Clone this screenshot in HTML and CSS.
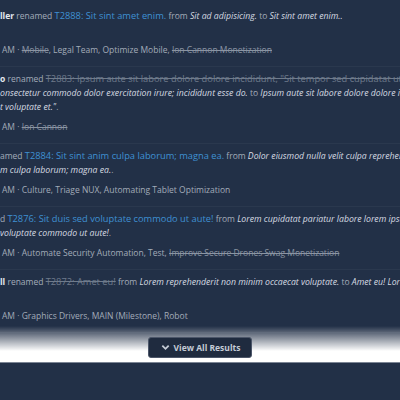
FILE: index.html
```html
<!DOCTYPE html>
<html lang="en">
<head>
  <meta charset="UTF-8">
  <title>Feed</title>
  <link rel="stylesheet" href="styles.css">
</head>
<body>
  <div class="feed">
    <div class="story">
      <div class="story-head">
        <div class="line"><b class="actor">ller</b> renamed <a class="task">T2888: Sit sint amet enim.</a> from <em>Sit ad adipisicing.</em> to <em>Sit sint amet enim..</em></div>
        <div class="line"></div>
      </div>
      <div class="story-foot">AM · <s>Mobile</s>, Legal Team, Optimize Mobile, <s>Ion Cannon Monetization</s></div>
    </div>

    <div class="story">
      <div class="story-head">
        <div class="line"><b class="actor">o</b> renamed <a class="task closed">T2883: Ipsum aute sit labore dolore dolore incididunt, "Sit tempor sed cupidatat ut labore</a></div>
        <div class="line"><em>onsectetur commodo dolor exercitation irure; incididunt esse do.</em> to <em>Ipsum aute sit labore dolore dolore incididunt</em></div>
        <div class="line"><em>t voluptate et."</em>.</div>
      </div>
      <div class="story-foot">AM · <s>Ion Cannon</s></div>
    </div>

    <div class="story">
      <div class="story-head">
        <div class="line">amed <a class="task">T2884: Sit sint anim culpa laborum; magna ea.</a> from <em>Dolor eiusmod nulla velit culpa reprehenderit</em></div>
        <div class="line"><em>m culpa laborum; magna ea.</em>.</div>
      </div>
      <div class="story-foot">AM · Culture, Triage NUX, Automating Tablet Optimization</div>
    </div>

    <div class="story">
      <div class="story-head">
        <div class="line">d <a class="task">T2876: Sit duis sed voluptate commodo ut aute!</a> from <em>Lorem cupidatat pariatur labore lorem ipsum sit</em></div>
        <div class="line"><em>voluptate commodo ut aute!</em>.</div>
      </div>
      <div class="story-foot">AM · Automate Security Automation, Test, <s>Improve Secure Drones Swag Monetization</s></div>
    </div>

    <div class="story">
      <div class="story-head">
        <div class="line"><b class="actor">ll</b> renamed <a class="task closed">T2872: Amet eu!</a> from <em>Lorem reprehenderit non minim occaecat voluptate.</em> to <em>Amet eu! Lorem ipsum</em></div>
        <div class="line"></div>
      </div>
      <div class="story-foot">AM · Graphics Drivers, MAIN (Milestone), Robot</div>
    </div>
  </div>

  <div class="more">
    <button class="more-button">
      <svg width="9" height="9" viewBox="0 0 10 10"><path d="M1.5 3 L5 6.5 L8.5 3" fill="none" stroke="currentColor" stroke-width="2"/></svg>
      View All Results
    </button>
  </div>
</body>
</html>
```

FILE: styles.css
```css
body {
  margin: 0;
  padding: 0;
  background: #223047;
  color: #a3acb9;
  font-family: 'Open Sans', 'Noto Sans', sans-serif;
  font-size: 8.5px;
  overflow: hidden;
}

.feed {
  padding-top: 9px;
}

.story {
  padding-bottom: 9px;
  margin-bottom: 5px;
  border-bottom: 1px solid rgba(255, 255, 255, 0.04);
}

.line {
  height: 14px;
  line-height: 14px;
  white-space: nowrap;
}

.actor {
  color: #e4e8ee;
  font-weight: 700;
}

.task {
  color: #3f91d3;
  font-size: 9.3px;
}

.task.closed {
  color: #6f7b8c;
  text-decoration: line-through;
}

em {
  color: #d6dbe2;
  font-size: 8.7px;
}

.story-foot {
  margin-top: 6px;
  line-height: 14px;
  white-space: nowrap;
  padding-left: 2px;
}

s {
  color: #8a94a3;
}

.more {
  box-sizing: border-box;
  height: 37px;
  margin-top: -12px;
  padding-top: 6px;
  display: flex;
  justify-content: center;
  align-items: center;
  background: linear-gradient(to bottom, rgba(255, 255, 255, 0) 0, #ffffff 25px, #ffffff 100%);
  border-bottom: 1px solid #7c8594;
}

.more-button {
  display: flex;
  align-items: center;
  gap: 4px;
  height: 21px;
  padding: 0 11px 0 12px;
  background: #1f2b3f;
  border: 1px solid #4c5669;
  border-radius: 3px;
  color: #c5ccd6;
  font-family: 'Open Sans', 'Noto Sans', sans-serif;
  font-size: 8.5px;
  font-weight: 700;
}
```
